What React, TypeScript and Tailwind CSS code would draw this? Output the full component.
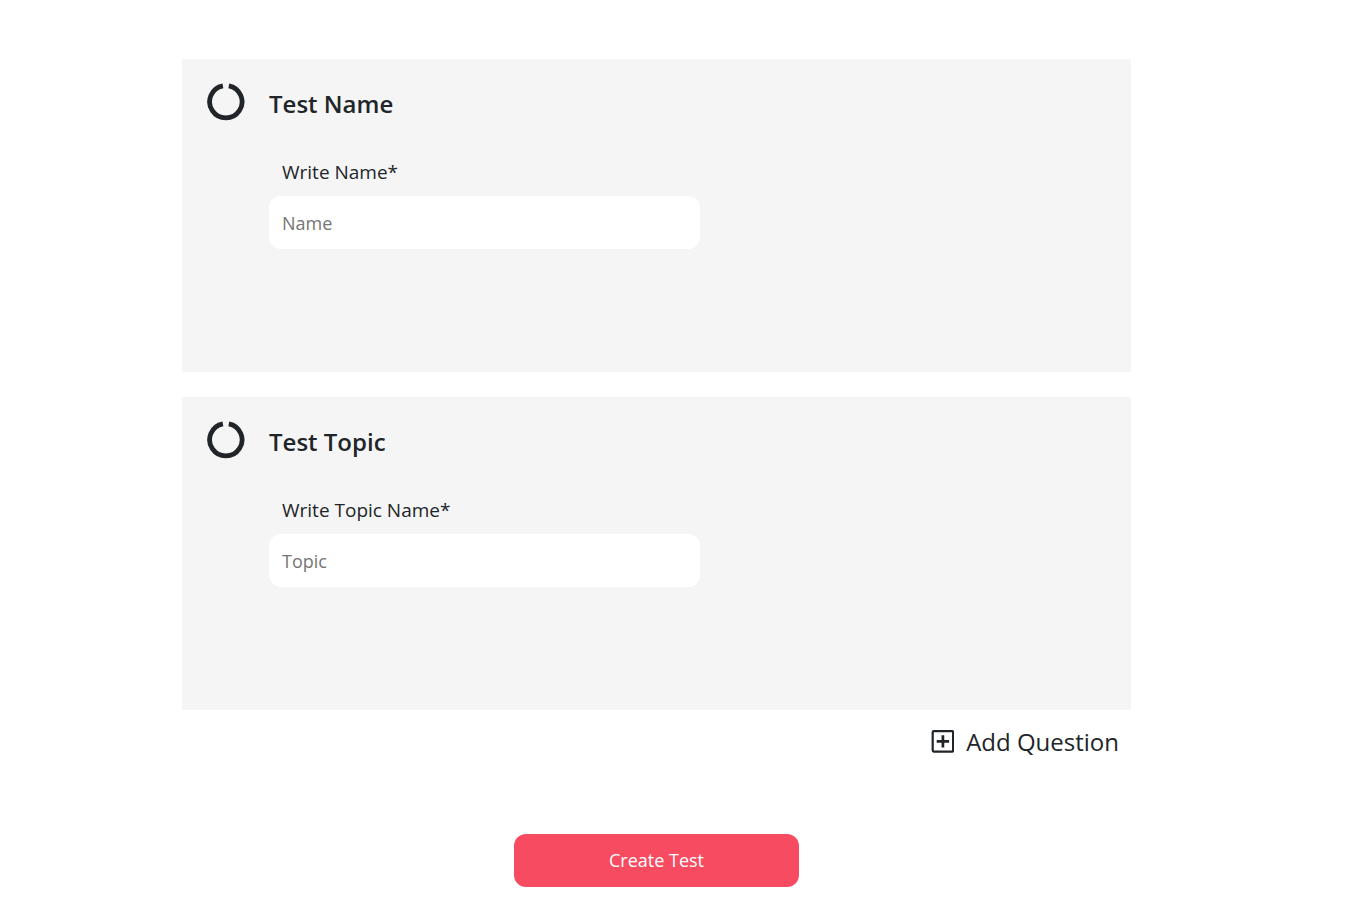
import { useId } from "react";

function Ring() {
  return (
    <svg className="size-10 shrink-0 text-[#212529]" viewBox="0 0 40 40" fill="none" stroke="currentColor" strokeWidth="4.8" aria-hidden="true">
      <path d="M16.9 2.8A16.2 16.2 0 1 0 22.8 2.8" />
    </svg>
  );
}

function Section({ title, label, placeholder }: { title: string; label: string; placeholder: string }) {
  const id = useId();
  return (
    <section className="flex min-h-[313px] gap-[23px] bg-[#f5f5f5] px-6 pt-6">
      <Ring />
      <div className="flex min-w-0 flex-1 flex-col items-start">
        <h2 className="pt-[3px] text-[24px] leading-9 font-semibold">{title}</h2>
        <label htmlFor={id} className="mt-[34px] px-[13px] text-[19px] leading-8">{label}</label>
        <input id={id} placeholder={placeholder} className="mt-2 h-[53px] w-full max-w-[431px] rounded-xl bg-white px-[13px] text-[18px] placeholder:text-[#757575]" />
      </div>
    </section>
  );
}

export default function App() {
  return (
    <main className="min-h-screen bg-white pt-[59px] pr-[226px] pb-9 pl-[182px] font-['Open_Sans',sans-serif] text-[#212529]">
      <form className="flex flex-col" onSubmit={(e) => e.preventDefault()}>
        <div className="flex flex-col gap-[25px]">
          <Section title="Test Name" label="Write Name*" placeholder="Name" />
          <Section title="Test Topic" label="Write Topic Name*" placeholder="Topic" />
        </div>
        <button type="button" className="mt-3 mr-3 flex items-center gap-3 self-end text-[24px] leading-10">
          <svg className="size-6" viewBox="0 0 24 24" fill="none" stroke="#212529" aria-hidden="true">
            <rect x="2.7" y="1.2" width="20.4" height="20.4" rx="1" strokeWidth="2.2" />
            <path d="M12.9 5.2v12.4M6.7 11.4h12.4" strokeWidth="2.7" />
          </svg>
          Add Question
        </button>
        <button type="submit" className="mt-[72px] h-[53px] w-[285px] self-center rounded-xl bg-[#f74b62] text-[18px] text-white">Create Test</button>
      </form>
    </main>
  );
}
